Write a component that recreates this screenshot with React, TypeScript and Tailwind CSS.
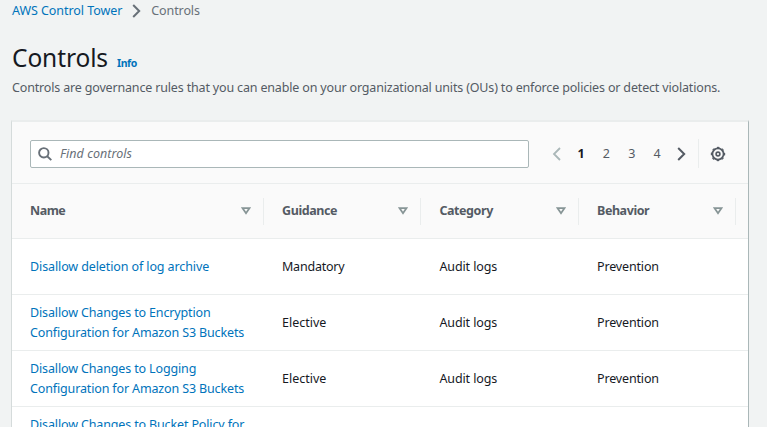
import React from "react";

const columns = [
  { label: "Name", tracking: "tracking-[-0.5px]" },
  { label: "Guidance", tracking: "tracking-[-0.4px]" },
  { label: "Category", tracking: "tracking-[-0.42px]" },
  { label: "Behavior", tracking: "tracking-[-0.42px]" },
];

const rows = [
  { name: ["Disallow deletion of log archive"], cells: ["Mandatory", "Audit logs", "Prevention"] },
  { name: ["Disallow Changes to Encryption", "Configuration for Amazon S3 Buckets"], cells: ["Elective", "Audit logs", "Prevention"] },
  { name: ["Disallow Changes to Logging", "Configuration for Amazon S3 Buckets"], cells: ["Elective", "Audit logs", "Prevention"] },
  { name: ["Disallow Changes to Bucket Policy for"], cells: [] },
];

const cellTracking: Record<string, string> = {
  Mandatory: "tracking-[-0.22px]",
  Elective: "tracking-[0px]",
  "Audit logs": "tracking-[-0.1px]",
  Prevention: "tracking-[-0.15px]",
};

const grid = "grid grid-cols-[252px_157.4px_157.6px_157px]";

function Chevron({ className, flip = false, width = 2 }: { className: string; flip?: boolean; width?: number }) {
  return (
    <svg viewBox="0 0 9 14" className={`h-[14px] w-[9px] shrink-0 ${className}`} fill="none" stroke="currentColor" strokeWidth={width}>
      <path d={flip ? "M8 1 2 7l6 6" : "M1.2 1 7.2 7l-6 6"} />
    </svg>
  );
}

function Gear() {
  return (
    <svg viewBox="0 0 16 16" className="h-4 w-4" fill="none" stroke="#545b64">
      <circle cx="8" cy="8" r="5.6" strokeWidth="1.8" />
      <circle cx="8" cy="8" r="6.6" strokeWidth="1.2" strokeDasharray="2.6 2.58" strokeDashoffset="1.3" />
      <circle cx="8" cy="8" r="1.9" strokeWidth="1.6" />
    </svg>
  );
}

export default function App() {
  return (
    <div className="h-[427px] w-[767px] overflow-hidden bg-[#f1f3f3] font-['Noto_Sans',sans-serif] text-[12.5px] leading-5 whitespace-nowrap text-[#16191f]">
      <nav className="flex h-[21px] items-center pl-3">
        <a className="tracking-[-0.06px] text-[#0073bb]">AWS Control Tower</a>
        <Chevron className="ml-[10px] text-[#687078]" />
        <span className="ml-[10px] tracking-[-0.1px] text-[#687078]">Controls</span>
      </nav>
      <header className="pl-3">
        <div className="mt-[19px] flex h-9 items-baseline">
          <h1 className="text-[24.5px] leading-9 tracking-[-0.1px]">Controls</h1>
          <a className="ml-[9px] text-[10.5px] font-bold tracking-[-0.4px] text-[#0073bb]">Info</a>
        </div>
        <p className="mt-[2px] tracking-[-0.165px] text-[#545b64]">
          Controls are governance rules that you can enable on your organizational units (OUs) to enforce policies or detect violations.
        </p>
      </header>
      <main className="mt-[22px] ml-[11px] w-[738px] border-t-2 border-r border-l border-t-[#eaeded] border-r-[#aab7b8] border-l-[#d5dbdb] bg-white">
        <div className="flex h-[62px] items-center border-b border-[#eaeded] bg-[#fafafa] pt-[2px] pl-[18px]">
          <div className="flex h-7 w-[499px] items-center rounded-[2px] border border-[#aab7b8] bg-white pl-[7px]">
            <svg viewBox="0 0 14 14" className="h-[14px] w-[14px]" fill="none" stroke="#687078" strokeWidth="1.9">
              <circle cx="5.8" cy="5.8" r="4.7" />
              <path d="m9.2 9.2 4.1 3.9" />
            </svg>
            <span className="ml-[8px] tracking-[0.05px] text-[#687078] italic">Find controls</span>
          </div>
          <Chevron className="ml-[23px] text-[#aab7b8]" flip width={1.8} />
          <div className="ml-[7px] flex text-center text-[#545b64]">
            <span className="w-[25.3px] pl-px font-bold text-[#16191f]">1</span>
            <span className="w-[25.3px] pl-px">2</span>
            <span className="w-[25.3px] pl-px">3</span>
            <span className="w-[25.3px] pl-px">4</span>
          </div>
          <Chevron className="ml-[8px] text-[#545b64]" />
          <span className="ml-[12px] h-[29px] w-px bg-[#eaeded]" />
          <span className="ml-[11px]"><Gear /></span>
        </div>
        <div className={`${grid} h-[55px] items-center border-b border-[#eaeded] bg-[#fafafa] font-bold text-[#545b64]`}>
          {columns.map((c) => (
            <div key={c.label} className="flex h-[27px] items-center justify-between border-r border-[#eaeded] pr-[12px] pl-[18px]">
              <span className={c.tracking}>{c.label}</span>
              <svg viewBox="0 0 10 8" className="h-2 w-[10px]" fill="none" stroke="#879596" strokeWidth="1.8">
                <path d="M1.6 1.2h6.8L5 6.2z" />
              </svg>
            </div>
          ))}
        </div>
        {rows.map((r, i) => (
          <div key={i} className={`${grid} h-14 border-b border-[#eaeded] py-[7.5px]`}>
            <a className={`flex flex-col pl-[18px] text-[#0073bb] ${i === 0 ? "justify-center" : ""}`}>
              {r.name.map((line) => (
                <span key={line} className={i === 0 ? "tracking-[-0.11px]" : "tracking-[-0.14px]"}>{line}</span>
              ))}
            </a>
            {r.cells.map((text) => (
              <span key={text} className={`self-center pl-[18px] ${cellTracking[text]}`}>{text}</span>
            ))}
          </div>
        ))}
      </main>
    </div>
  );
}
